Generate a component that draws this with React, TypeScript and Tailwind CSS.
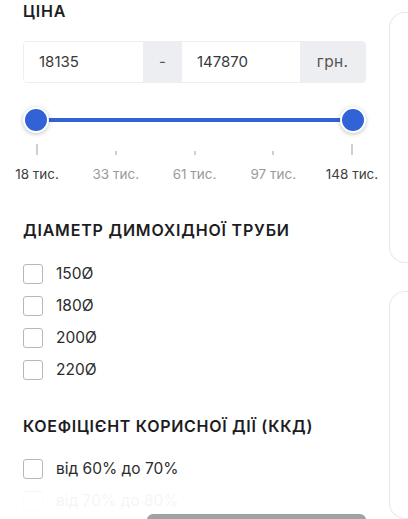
import React from 'react';

const ticks = [
  { label: '18 тис.', tall: true },
  { label: '33 тис.', tall: false },
  { label: '61 тис.', tall: false },
  { label: '97 тис.', tall: false },
  { label: '148 тис.', tall: true },
];

const diameters = ['150Ø', '180Ø', '200Ø', '220Ø'];

const Checkbox: React.FC<{ label: string }> = ({ label }) => (
  <label className="flex h-[32px] items-center gap-[13px]">
    <span className="block h-[20px] w-[20px] shrink-0 rounded-[3px] border border-[#b3b8bd] bg-white" />
    <span className="text-[15.5px] text-[#2c2c2c]">{label}</span>
  </label>
);

const App: React.FC = () => {
  return (
    <div
      className="flex h-[519px] w-[408px] overflow-hidden bg-white"
      style={{ fontFamily: 'Inter, "Noto Sans", sans-serif' }}
    >
      <div className="relative w-[369px] shrink-0 pl-[23px] pr-[3px]">
        <h3 className="mt-[1px] text-[16px] font-semibold leading-[20px] tracking-[0.8px] text-[#1d1d1f]">ЦІНА</h3>

        <div className="mt-[20px] flex h-[42px] overflow-hidden rounded-[4px] border border-[#eceef0]">
          <div className="flex w-[119px] items-center bg-white pl-[15px] text-[15px] text-[#3a3a3a]">18135</div>
          <div className="flex w-[39px] items-center justify-center bg-[#eceef1] text-[15px] text-[#555]">-</div>
          <div className="flex w-[118px] items-center bg-white pl-[15px] text-[15px] text-[#3a3a3a]">147870</div>
          <div className="flex flex-1 items-center justify-center bg-[#eceef1] text-[15.5px] tracking-[0.3px] text-[#555]">грн.</div>
        </div>

        <div className="relative mt-[24px] h-[26px]">
          <div className="absolute left-[14px] right-[12px] top-[11px] h-[4px] bg-[#3163d6]" />
          <div className="absolute left-0 top-0 h-[26px] w-[26px] rounded-full border-[2px] border-white bg-[#3163d6] shadow-[0_1px_4px_rgba(0,0,0,0.25)]" />
          <div className="absolute right-0 top-0 h-[26px] w-[26px] rounded-full border-[2px] border-white bg-[#3163d6] shadow-[0_1px_4px_rgba(0,0,0,0.25)]" />
        </div>

        <div className="mt-[11px] flex justify-between px-[2px]">
          {ticks.map((t) => (
            <div key={t.label} className="flex w-[24px] flex-col items-center">
              <div className="flex h-[11px] items-end">
                <div className={t.tall ? 'h-[11px] w-[2px] bg-[#cfcfcf]' : 'h-[4px] w-[2px] bg-[#cfcfcf]'} />
              </div>
              <div
                className={
                  'mt-[11px] whitespace-nowrap text-[13.5px] leading-[16px] ' +
                  (t.tall ? 'text-[#3f3f3f]' : 'text-[#9a9a9a]')
                }
              >
                {t.label}
              </div>
            </div>
          ))}
        </div>

        <h3 className="mt-[38px] whitespace-nowrap text-[16px] font-semibold leading-[20px] tracking-[0.8px] text-[#1d1d1f]">
          ДІАМЕТР ДИМОХІДНОЇ ТРУБИ
        </h3>
        <div className="mt-[18px] flex flex-col">
          {diameters.map((d) => (
            <Checkbox key={d} label={d} />
          ))}
        </div>

        <h3 className="mt-[30px] whitespace-nowrap text-[16px] font-semibold leading-[20px] tracking-[0.7px] text-[#1d1d1f]">
          КОЕФІЦІЄНТ КОРИСНОЇ ДІЇ (ККД)
        </h3>
        <div className="mt-[17px] flex flex-col">
          <Checkbox label="від 60% до 70%" />
          <Checkbox label="від 70% до 80%" />
        </div>

        <div className="pointer-events-none absolute bottom-[26px] left-0 right-0 h-[14px] bg-gradient-to-b from-white/0 to-white/95" />
        <div className="pointer-events-none absolute bottom-0 left-0 right-0 h-[26px] bg-white/95" />
        <div className="absolute bottom-[-20px] left-[147px] h-[25px] w-[219px] rounded-t-[6px] bg-[#9da2a4]" />
      </div>

      <div className="ml-[20px] flex flex-1 flex-col gap-[28px] pt-[12px]">
        <div className="h-[265px] rounded-l-[16px] border border-r-0 border-[#e9e9e9]" />
        <div className="h-[240px] rounded-l-[16px] border border-r-0 border-[#e9e9e9]" />
      </div>
    </div>
  );
};

export default App;
